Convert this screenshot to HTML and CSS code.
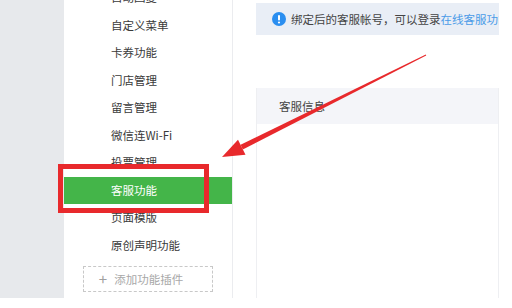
FILE: index.html
```html
<!DOCTYPE html>
<html lang="zh-CN">
<head>
<meta charset="utf-8">
<link rel="stylesheet" href="styles.css">
</head>
<body>
<div class="page">
  <div class="gutter"></div>
  <nav class="sidebar">
    <ul class="menu">
      <li>自动回复</li>
      <li>自定义菜单</li>
      <li>卡券功能</li>
      <li>门店管理</li>
      <li>留言管理</li>
      <li>微信连Wi-Fi</li>
      <li>投票管理</li>
      <li class="active">客服功能</li>
      <li>页面模版</li>
      <li>原创声明功能</li>
    </ul>
    <div class="add-btn"><span class="plus">+</span>添加功能插件</div>
  </nav>
  <main class="main">
    <div class="notice">
      <span class="info-icon">
        <svg width="14" height="14" viewBox="0 0 14 14"><circle cx="7" cy="7" r="7" fill="#2a8ef0"/><rect x="6" y="3" width="2" height="5.5" rx="1" fill="#fff"/><circle cx="7" cy="10.5" r="1.1" fill="#fff"/></svg>
      </span>
      <span class="notice-text">绑定后的客服帐号，可以登录<span class="link">在线客服功能</span></span>
    </div>
    <section class="panel">
      <div class="panel-head">客服信息</div>
    </section>
  </main>
</div>
<div class="highlight"></div>
<svg class="annot" width="512" height="308" viewBox="0 0 512 308">
  <polygon points="426.2,55.4 242.8,149.6 240.6,144.8 425.8,54.6" fill="#e8292c"/>
  <polygon points="222,157 245.5,154.8 238,139.8" fill="#e8292c"/>
</svg>
</body>
</html>
```
FILE: styles.css
```css
html, body {
  margin: 0;
  padding: 0;
}
body {
  width: 512px;
  height: 308px;
  overflow: hidden;
  background: #fff;
  font-family: "Noto Sans CJK SC", "Noto Sans", sans-serif;
  font-size: 11.5px;
  color: #3a3a3a;
  position: relative;
}
.page {
  display: flex;
  height: 298px;
}
.gutter {
  width: 64px;
  background: #e7e9ec;
}
.sidebar {
  width: 168px;
  background: #fff;
  border-right: 1px solid #ebecef;
  overflow: hidden;
}
.menu {
  list-style: none;
  margin: -15.75px 0 0 0;
  padding: 0;
}
.menu li {
  height: 27.5px;
  line-height: 27.5px;
  padding-left: 47px;
  white-space: nowrap;
}
.menu li.active {
  background: #44b549;
  color: #fff;
}
.add-btn {
  margin: 6.5px 19px 0 19px;
  height: 26px;
  box-sizing: border-box;
  border: 1px dashed #c8c8c8;
  color: #a8a8a8;
  display: flex;
  align-items: center;
  justify-content: center;
  padding-right: 14px;
  gap: 7px;
}
.plus {
  font-size: 15px;
  line-height: 1;
  color: #a0a0a0;
}
.main {
  flex: 1;
  display: flex;
  flex-direction: column;
  padding: 3px 13px 0 23px;
  min-width: 0;
}
.notice {
  height: 32px;
  background: #e9eef6;
  display: flex;
  align-items: center;
  padding-left: 16px;
  gap: 5px;
  overflow: hidden;
  white-space: nowrap;
  color: #444;
}
.info-icon {
  display: flex;
}
.link {
  color: #4a9be8;
}
.panel {
  margin-top: 53px;
  flex: 1;
  border-left: 1px solid #eeeff2;
  border-right: 1px solid #eeeff2;
}
.panel-head {
  height: 36px;
  line-height: 36px;
  background: #f4f5f9;
  padding-left: 22px;
  color: #444;
}
.highlight {
  position: absolute;
  left: 58px;
  top: 164px;
  width: 151px;
  height: 49px;
  box-sizing: border-box;
  border: 5px solid #e8292c;
}
.annot {
  position: absolute;
  left: 0;
  top: 0;
  pointer-events: none;
}
```
